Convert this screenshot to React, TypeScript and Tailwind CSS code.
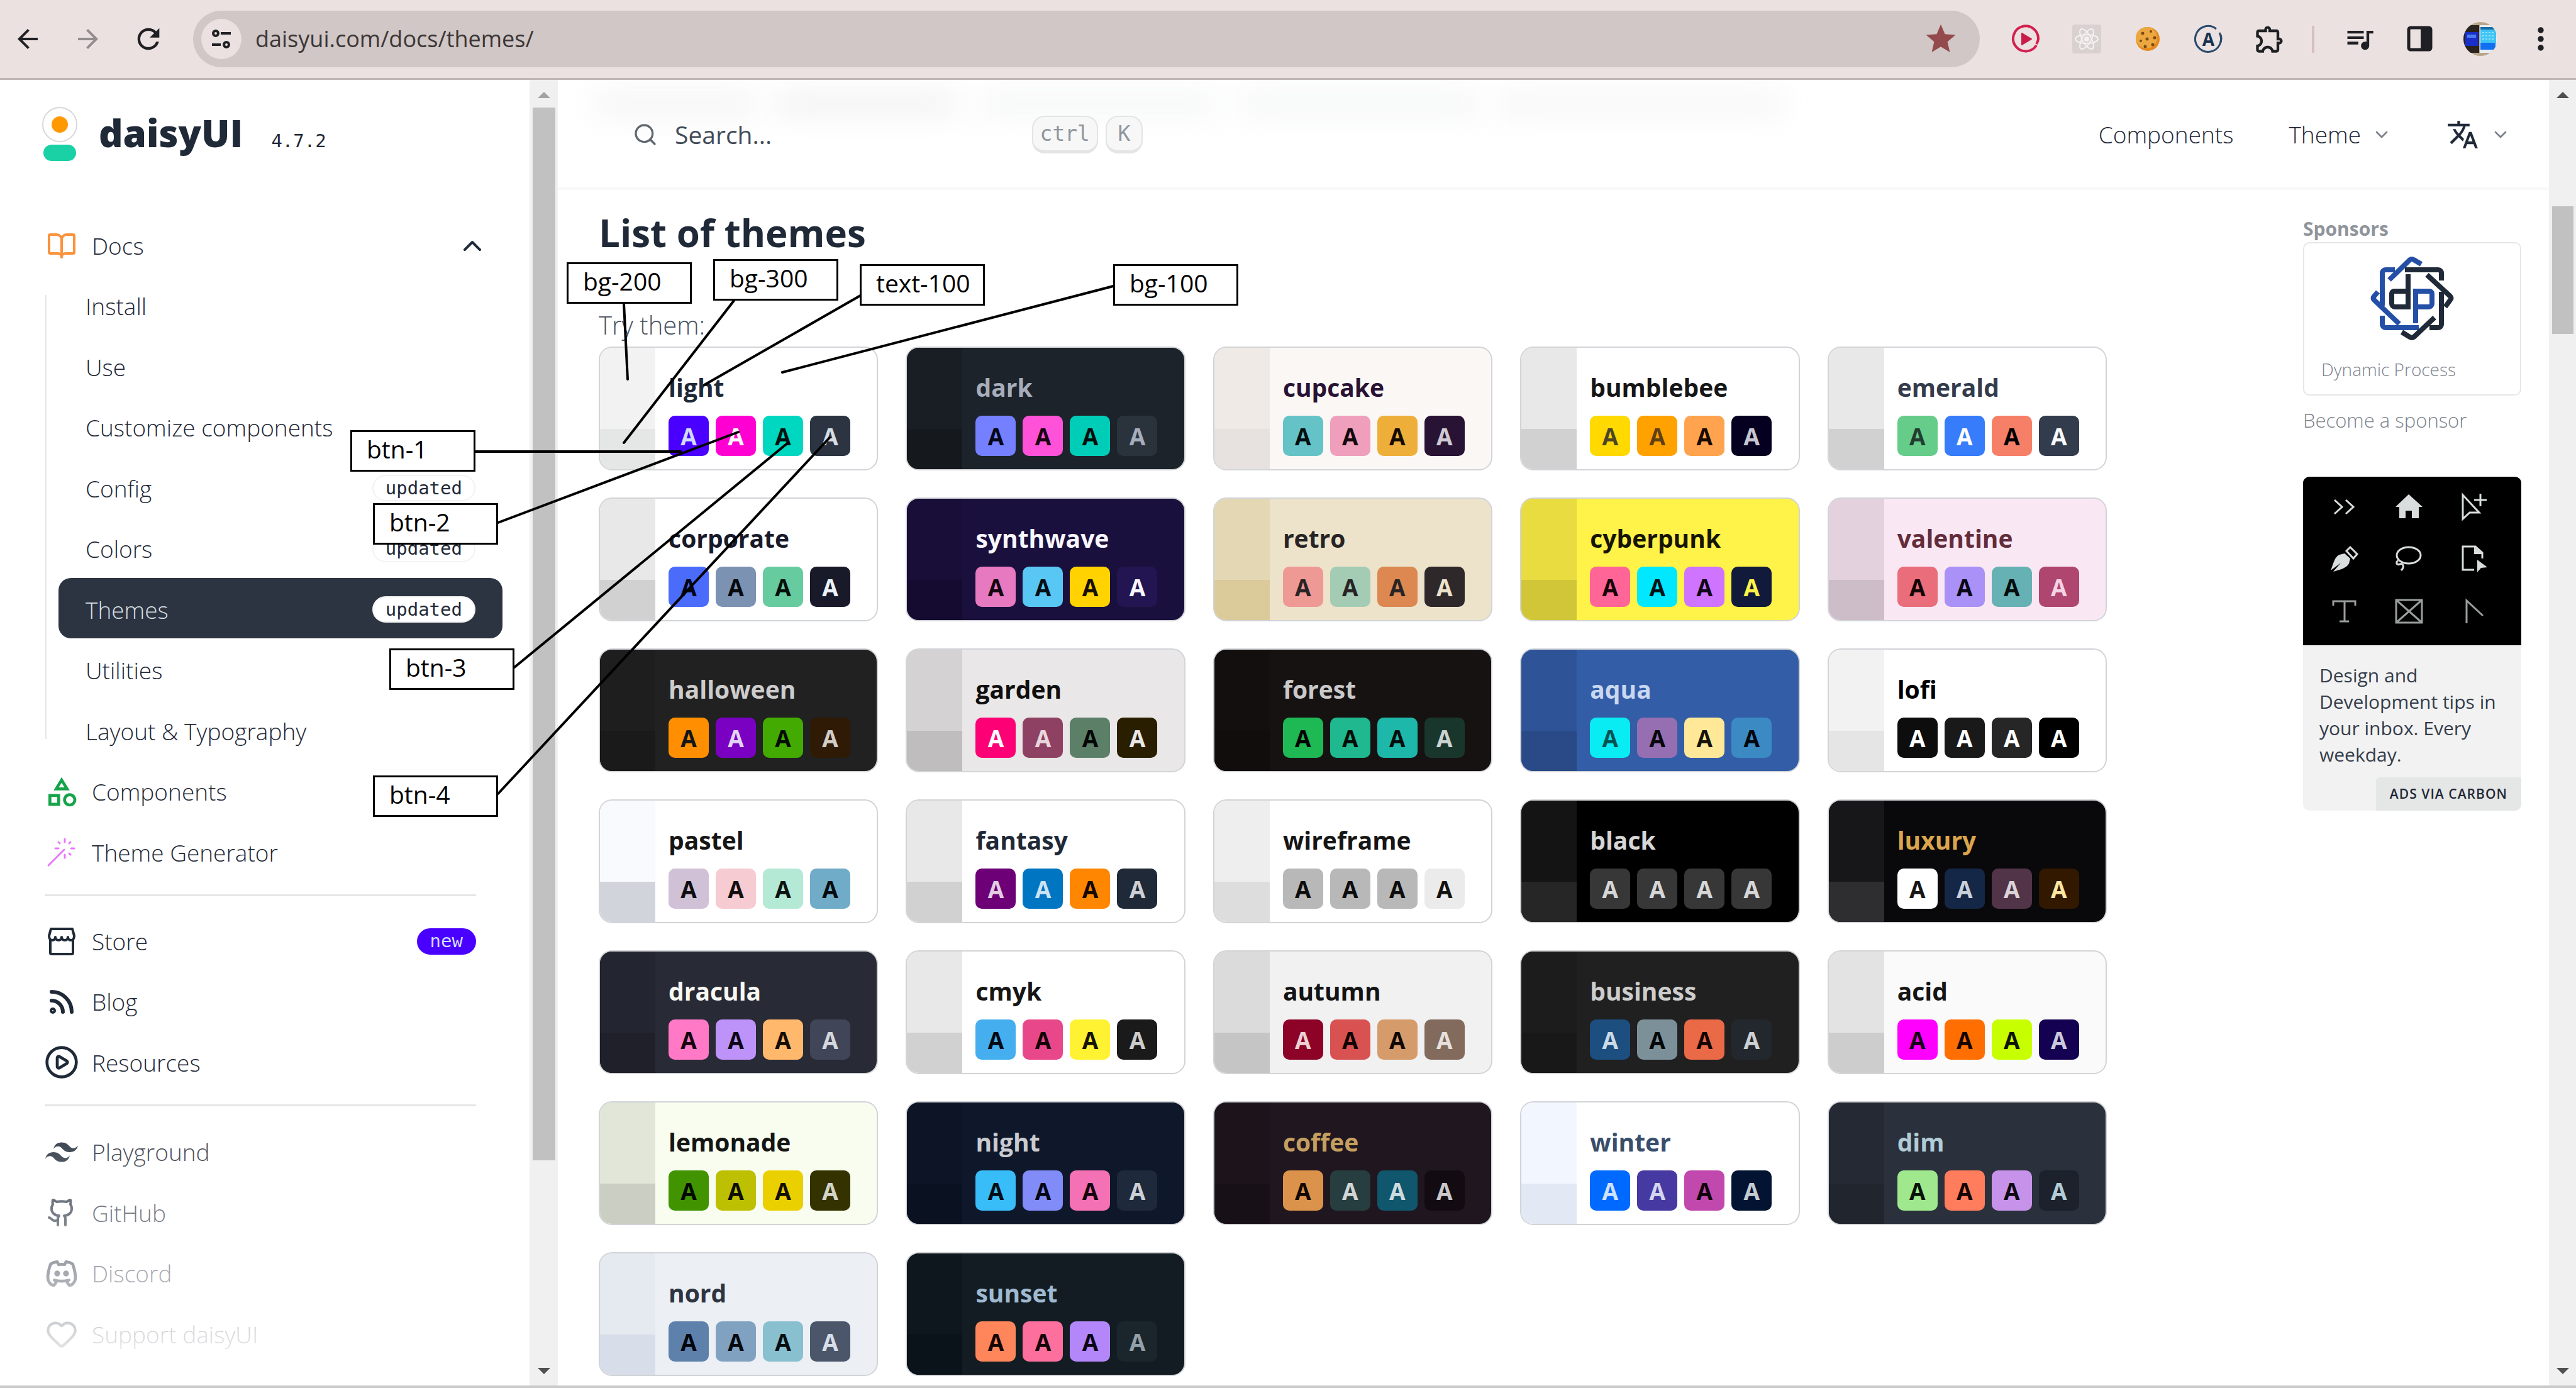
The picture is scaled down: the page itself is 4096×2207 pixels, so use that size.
import type { ReactNode } from "react";
import { BookOpen, ChevronDown, ChevronUp, CirclePlay, Github, Heart, Rss, Search } from "lucide-react";
import {
  MdArrowBack,
  MdArrowForward,
  MdMoreVert,
  MdOutlineCategory,
  MdOutlineExtension,
  MdQueueMusic,
  MdRefresh,
  MdStar,
  MdTranslate,
} from "react-icons/md";
import { TbBrandDiscord } from "react-icons/tb";
import { SiTailwindcss } from "react-icons/si";

type Theme = {
  name: string;
  base: string;
  side: string;
  corner: string;
  swatches: [string, string, string, string];
};

const themes: Theme[] = [
  { name: "light", base: "bg-white text-[#1f2937]", side: "bg-[#f2f2f2]", corner: "bg-[#e5e6e6]", swatches: ["bg-[#4a00ff] text-[#d1dbff]", "bg-[#ff00d3] text-[#fff8fd]", "bg-[#00d7c0] text-[#00110e]", "bg-[#2b3440] text-[#d7dde4]"] },
  { name: "dark", base: "bg-[#1d232a] text-[#a6adbb]", side: "bg-[#191e24]", corner: "bg-[#15191e]", swatches: ["bg-[#7480ff] text-[#050617]", "bg-[#ff52d9] text-[#190211]", "bg-[#00cdb7] text-[#000f0c]", "bg-[#2a323c] text-[#a6adbb]"] },
  { name: "cupcake", base: "bg-[#faf7f5] text-[#291334]", side: "bg-[#efeae6]", corner: "bg-[#e7e2df]", swatches: ["bg-[#65c3c8] text-[#030e0f]", "bg-[#ef9fbc] text-[#14090d]", "bg-[#eeaf3a] text-[#140b00]", "bg-[#291334] text-[#cfcad3]"] },
  { name: "bumblebee", base: "bg-white text-[#161616]", side: "bg-[#e8e8e8]", corner: "bg-[#d1d1d1]", swatches: ["bg-[#ffd900] text-[#4c4528]", "bg-[#ffa200] text-[#5f3f14]", "bg-[#ffa34f] text-[#160a02]", "bg-[#05001f] text-[#c7c5d0]"] },
  { name: "emerald", base: "bg-white text-[#333c4d]", side: "bg-[#e8e8e8]", corner: "bg-[#d1d1d1]", swatches: ["bg-[#66cc8a] text-[#223d30]", "bg-[#377cfb] text-[#ffffff]", "bg-[#f68067] text-[#000000]", "bg-[#333c4d] text-[#f9fafb]"] },
  { name: "corporate", base: "bg-white text-[#181a2a]", side: "bg-[#e8e8e8]", corner: "bg-[#d1d1d1]", swatches: ["bg-[#4b6bfb] text-[#020515]", "bg-[#7b92b2] text-[#06080c]", "bg-[#67cba0] text-[#040f0a]", "bg-[#181a2a] text-[#edf2f7]"] },
  { name: "synthwave", base: "bg-[#1a103d] text-[#f9f7fd]", side: "bg-[#180e37]", corner: "bg-[#150b30]", swatches: ["bg-[#e779c1] text-[#13060e]", "bg-[#58c7f3] text-[#030e14]", "bg-[#ffd200] text-[#161000]", "bg-[#221551] text-[#f9f7fd]"] },
  { name: "retro", base: "bg-[#ece3ca] text-[#282425]", side: "bg-[#e4d8b4]", corner: "bg-[#dbca9a]", swatches: ["bg-[#ef9995] text-[#282425]", "bg-[#a4cbb4] text-[#282425]", "bg-[#dc8850] text-[#282425]", "bg-[#2e282a] text-[#ece3ca]"] },
  { name: "cyberpunk", base: "bg-[#fff248] text-[#161503]", side: "bg-[#e8dc40]", corner: "bg-[#d1c638]", swatches: ["bg-[#ff6596] text-[#160408]", "bg-[#00e8ff] text-[#001316]", "bg-[#ce74ff] text-[#0f0516]", "bg-[#111a3b] text-[#fff248]"] },
  { name: "valentine", base: "bg-[#fae7f4] text-[#632c3b]", side: "bg-[#e3d2de]", corner: "bg-[#cdbdc8]", swatches: ["bg-[#e96d7b] text-[#130405]", "bg-[#a991f7] text-[#0a0815]", "bg-[#66b1b3] text-[#040c0c]", "bg-[#af4670] text-[#f5d3e4]"] },
  { name: "halloween", base: "bg-[#212121] text-[#cdcdcd]", side: "bg-[#1e1e1e]", corner: "bg-[#1a1a1a]", swatches: ["bg-[#ff8f00] text-[#131616]", "bg-[#7a00c2] text-[#e3d4f6]", "bg-[#42aa00] text-[#020b00]", "bg-[#2f1b05] text-[#d2ccc7]"] },
  { name: "garden", base: "bg-[#e9e7e7] text-[#100f0f]", side: "bg-[#d4d2d2]", corner: "bg-[#bfbdbd]", swatches: ["bg-[#fe0075] text-[#ffffff]", "bg-[#8e4162] text-[#e9d6dc]", "bg-[#5c7f67] text-[#030604]", "bg-[#291e00] text-[#e9e7e7]"] },
  { name: "forest", base: "bg-[#171212] text-[#cac9c9]", side: "bg-[#140f0f]", corner: "bg-[#110d0d]", swatches: ["bg-[#1eb854] text-[#000000]", "bg-[#1fb88f] text-[#000c07]", "bg-[#1eb8ab] text-[#000c0b]", "bg-[#19362d] text-[#cdd3d1]"] },
  { name: "aqua", base: "bg-[#345da7] text-[#c9d8f0]", side: "bg-[#2e5397]", corner: "bg-[#294a87]", swatches: ["bg-[#09ecf3] text-[#005355]", "bg-[#966fb3] text-[#09050d]", "bg-[#ffe999] text-[#161309]", "bg-[#3b8ac4] text-[#02070e]"] },
  { name: "lofi", base: "bg-white text-black", side: "bg-[#f2f2f2]", corner: "bg-[#e6e5e5]", swatches: ["bg-[#0d0d0d] text-white", "bg-[#1a1919] text-white", "bg-[#262626] text-white", "bg-black text-white"] },
  { name: "pastel", base: "bg-white text-[#161616]", side: "bg-[#f9fafe]", corner: "bg-[#d1d5db]", swatches: ["bg-[#d1c1d7] text-[#100e11]", "bg-[#f6cbd1] text-[#150f10]", "bg-[#b4e9d6] text-[#0c1311]", "bg-[#70acc7] text-[#050b0f]"] },
  { name: "fantasy", base: "bg-white text-[#1f2937]", side: "bg-[#e8e8e8]", corner: "bg-[#d1d1d1]", swatches: ["bg-[#6d0076] text-[#e2cde3]", "bg-[#0075c2] text-[#cbe3f5]", "bg-[#ff8600] text-[#160700]", "bg-[#1f2937] text-[#cdd0d3]"] },
  { name: "wireframe", base: "bg-white text-[#161616]", side: "bg-[#eeeeee]", corner: "bg-[#dddddd]", swatches: ["bg-[#b8b8b8] text-[#0d0d0d]", "bg-[#b8b8b8] text-[#0d0d0d]", "bg-[#b8b8b8] text-[#0d0d0d]", "bg-[#ebebeb] text-[#131313]"] },
  { name: "black", base: "bg-black text-[#d6d6d6]", side: "bg-[#141414]", corner: "bg-[#262626]", swatches: ["bg-[#373737] text-[#d6d6d6]", "bg-[#373737] text-[#d6d6d6]", "bg-[#373737] text-[#d6d6d6]", "bg-[#373737] text-[#d6d6d6]"] },
  { name: "luxury", base: "bg-[#09090b] text-[#dca54c]", side: "bg-[#171618]", corner: "bg-[#2e2d2f]", swatches: ["bg-white text-[#161616]", "bg-[#152747] text-[#cad0da]", "bg-[#513448] text-[#dad3d8]", "bg-[#331800] text-[#ffe7a3]"] },
  { name: "dracula", base: "bg-[#282a36] text-[#f8f8f2]", side: "bg-[#232530]", corner: "bg-[#1f202a]", swatches: ["bg-[#ff79c6] text-[#16050e]", "bg-[#bd93f9] text-[#0d0815]", "bg-[#ffb86c] text-[#160d04]", "bg-[#414558] text-[#d6d7db]"] },
  { name: "cmyk", base: "bg-white text-[#161616]", side: "bg-[#e8e8e8]", corner: "bg-[#d1d1d1]", swatches: ["bg-[#45aeee] text-[#020b14]", "bg-[#e8488a] text-[#130307]", "bg-[#fff232] text-[#161402]", "bg-[#1a1a1a] text-[#cbcbcb]"] },
  { name: "autumn", base: "bg-[#f1f1f1] text-[#141414]", side: "bg-[#dbdbdb]", corner: "bg-[#c5c5c5]", swatches: ["bg-[#8c0327] text-[#edd0d1]", "bg-[#d85251] text-[#110202]", "bg-[#d59b6a] text-[#100905]", "bg-[#826a5c] text-[#e6e0dd]"] },
  { name: "business", base: "bg-[#202020] text-[#cdcdcd]", side: "bg-[#1c1c1c]", corner: "bg-[#181818]", swatches: ["bg-[#1c4e80] text-[#ccd9e6]", "bg-[#7c909a] text-[#050709]", "bg-[#ea6947] text-[#130402]", "bg-[#23282e] text-[#cdcfd1]"] },
  { name: "acid", base: "bg-[#fafafa] text-[#151515]", side: "bg-[#e3e3e3]", corner: "bg-[#cdcdcd]", swatches: ["bg-[#ff00ff] text-[#160016]", "bg-[#ff6e00] text-[#160400]", "bg-[#c8ff00] text-[#0e1600]", "bg-[#140151] text-[#cac9db]"] },
  { name: "lemonade", base: "bg-[#f8fdef] text-[#151614]", side: "bg-[#e1e6d9]", corner: "bg-[#cbcfc3]", swatches: ["bg-[#419400] text-[#010800]", "bg-[#bdc000] text-[#0d0e00]", "bg-[#ebd000] text-[#131000]", "bg-[#343300] text-[#d3d3c8]"] },
  { name: "night", base: "bg-[#0f172a] text-[#c9cbd0]", side: "bg-[#0c1425]", corner: "bg-[#0a1120]", swatches: ["bg-[#38bdf8] text-[#010d15]", "bg-[#818cf8] text-[#060715]", "bg-[#f471b5] text-[#14040c]", "bg-[#1e293b] text-[#cccfd3]"] },
  { name: "coffee", base: "bg-[#20161f] text-[#c59f60]", side: "bg-[#1c131b]", corner: "bg-[#181017]", swatches: ["bg-[#db924b] text-[#110802]", "bg-[#263e3f] text-[#d0d5d5]", "bg-[#10576d] text-[#cddbdf]", "bg-[#120c12] text-[#c9c7c9]"] },
  { name: "winter", base: "bg-white text-[#394e6a]", side: "bg-[#f2f7ff]", corner: "bg-[#e3e9f4]", swatches: ["bg-[#0069ff] text-[#cde2ff]", "bg-[#463aa2] text-[#d3d5ee]", "bg-[#c148ac] text-[#0e020b]", "bg-[#021431] text-[#c5cad1]"] },
  { name: "dim", base: "bg-[#2a303c] text-[#b2ccd6]", side: "bg-[#242933]", corner: "bg-[#20252e]", swatches: ["bg-[#9fe88d] text-[#091307]", "bg-[#ff7d5c] text-[#160503]", "bg-[#c792e9] text-[#0e0813]", "bg-[#1c212b] text-[#b2ccd6]"] },
  { name: "nord", base: "bg-[#eceff4] text-[#2e3440]", side: "bg-[#e5e9f0]", corner: "bg-[#d8dee9]", swatches: ["bg-[#5e81ac] text-[#03060b]", "bg-[#81a1c1] text-[#06090e]", "bg-[#88c0d0] text-[#070e10]", "bg-[#4c566a] text-[#d8dee9]"] },
  { name: "sunset", base: "bg-[#121c22] text-[#9fb9d0]", side: "bg-[#0e171e]", corner: "bg-[#091319]", swatches: ["bg-[#ff865b] text-[#160603]", "bg-[#fd6f9c] text-[#160409]", "bg-[#b387fa] text-[#0b0615]", "bg-[#1b262c] text-[#94a0a9]"] },
];

function StoreIcon() {
  return (
    <svg viewBox="0 0 48 48" className="size-12" fill="none" stroke="currentColor" strokeWidth="4" strokeLinejoin="round">
      <path d="M6 22v20a2 2 0 0 0 2 2h32a2 2 0 0 0 2-2V22" />
      <path d="M7 4h34l3 11c0 4-2 7-5 7-4 0-5-3-5-5 0 3-2 5-5 5s-5-2-5-5c0 3-2 5-5 5s-5-2-5-5c0 2-1 5-5 5-3 0-5-3-5-7z" />
    </svg>
  );
}

function WandIcon() {
  return (
    <svg viewBox="0 0 48 48" className="size-12 text-[#e879f9]" fill="none" stroke="currentColor" strokeWidth="3" strokeLinecap="round">
      <path d="M3 45 28 20" />
      <path d="M29 3v5M29 28v5M14 18h5M39 18h5M19 8l2 2M38 8l-2 2M38 28l-2-2" />
    </svg>
  );
}

function TuneIcon() {
  return (
    <svg viewBox="0 0 40 40" className="size-10" fill="none" stroke="#1f2023" strokeWidth="4">
      <circle cx="11" cy="11" r="4" />
      <path d="M19 11h16M5 29h14" />
      <circle cx="28" cy="29" r="4" />
    </svg>
  );
}

function ReactExtIcon() {
  return (
    <svg viewBox="0 0 46 46" className="size-[46px]" fill="none" stroke="#f6f1f1" strokeWidth="2">
      <rect width="46" height="46" rx="4" fill="#d9d1d0" stroke="none" />
      <ellipse cx="23" cy="23" rx="18" ry="7" />
      <ellipse cx="23" cy="23" rx="18" ry="7" transform="rotate(60 23 23)" />
      <ellipse cx="23" cy="23" rx="18" ry="7" transform="rotate(120 23 23)" />
      <circle cx="23" cy="23" r="3" fill="#f6f1f1" />
    </svg>
  );
}

function PlayExtIcon() {
  return (
    <svg viewBox="0 0 46 46" className="size-[46px]">
      <path d="M40 33A20 20 0 1 1 43 23a20 20 0 0 1-3 8" fill="none" stroke="#d41f4f" strokeWidth="4" />
      <path d="M17 14v18l15-9z" fill="#c91c4b" stroke="#c91c4b" strokeWidth="2" strokeLinejoin="round" />
    </svg>
  );
}

function CookieIcon() {
  return (
    <svg viewBox="0 0 40 40" className="size-10">
      <circle cx="20" cy="20" r="19" fill="#e58a1c" />
      <circle cx="18" cy="18" r="17" fill="#eba740" />
      <g fill="#7d4a16">
        <circle cx="12" cy="11" r="2.5" />
        <circle cx="25" cy="8" r="2" />
        <circle cx="19" cy="20" r="2.5" />
        <circle cx="31" cy="18" r="2.5" />
        <circle cx="9" cy="23" r="2" />
        <circle cx="16" cy="32" r="2.5" />
        <circle cx="28" cy="29" r="2.5" />
      </g>
    </svg>
  );
}

function LetterExtIcon() {
  return (
    <span className="relative flex size-[46px] items-center justify-center">
      <svg viewBox="0 0 46 46" className="absolute inset-0" fill="none" stroke="#2b4a6b" strokeWidth="3">
        <path d="M40 13a20.500 20.500 0 1 1-5-6" />
        <path d="M42 16a21 21 0 0 1 0 12" />
      </svg>
      <span className="font-['Open_Sans',sans-serif] text-[28px] leading-none font-bold text-[#17324f]">A</span>
    </span>
  );
}

function SidePanelIcon() {
  return (
    <svg viewBox="0 0 42 42" className="size-[42px]">
      <rect x="3" y="3" width="35" height="35" rx="3" fill="none" stroke="#1f2023" strokeWidth="5" />
      <path d="M22 3h16v35H22z" fill="#1f2023" />
    </svg>
  );
}

function Avatar() {
  return (
    <svg viewBox="0 0 54 54" className="size-[54px]">
      <defs>
        <clipPath id="avatar-clip">
          <circle cx="27" cy="27" r="27" />
        </clipPath>
      </defs>
      <g clipPath="url(#avatar-clip)">
        <rect width="54" height="54" fill="#b7a68a" />
        <rect x="0" y="5" width="25" height="44" fill="#2a2320" />
        <rect x="3" y="16" width="21" height="22" fill="#1a2fc8" />
        <rect x="6" y="20" width="14" height="5" fill="#4d7df0" />
        <rect x="26" y="5" width="28" height="44" fill="#e9edf0" />
        <rect x="27" y="8" width="26" height="4" fill="#1a6ea8" />
        <rect x="27" y="12" width="25" height="22" fill="#3fc3f4" />
        <rect x="27" y="33" width="24" height="11" fill="#1170f2" />
        <path d="M30 17h18M30 22h18M30 27h18" stroke="#8fe3fa" strokeWidth="2" strokeDasharray="3 2" />
      </g>
    </svg>
  );
}

function IconButton({ label, children, className }: { label: string; children: ReactNode; className: string }) {
  return (
    <button type="button" aria-label={label} className={`flex items-center justify-center ${className}`}>
      {children}
    </button>
  );
}

function BrowserBar() {
  return (
    <header className="flex h-[127px] shrink-0 items-center border-b-3 border-[#bfb5b4] bg-[#ebe1e0] text-[#1f2023]">
      <div className="flex items-center gap-[52px] pl-[22px]">
        <IconButton label="Back" className="size-11"><MdArrowBack className="size-12 shrink-0" /></IconButton>
        <IconButton label="Forward" className="size-11 text-[#948d8d]"><MdArrowForward className="size-12 shrink-0" /></IconButton>
        <IconButton label="Reload" className="size-11"><MdRefresh className="size-13 shrink-0" /></IconButton>
      </div>
      <div className="ml-[49px] flex h-[90px] min-w-0 flex-1 items-center rounded-full bg-[#d0c7c6] pr-[34px] pl-[13px]">
        <IconButton label="Site information" className="size-16 rounded-full bg-[#ebe1e0]"><TuneIcon /></IconButton>
        <input
          aria-label="Address"
          defaultValue="daisyui.com/docs/themes/"
          className="ml-[22px] min-w-0 flex-1 bg-transparent text-[36px] leading-[60px] text-[#3c3636] outline-none"
        />
        <IconButton label="Bookmark this page" className="size-14 text-[#944a4c]"><MdStar className="size-14" /></IconButton>
      </div>
      <div className="flex items-center pl-6">
        <IconButton label="Video extension" className="w-[97px]"><PlayExtIcon /></IconButton>
        <IconButton label="React tools" className="w-[97px]"><ReactExtIcon /></IconButton>
        <IconButton label="Cookies" className="w-[97px]"><CookieIcon /></IconButton>
        <IconButton label="Accessibility tools" className="w-[97px]"><LetterExtIcon /></IconButton>
        <IconButton label="Extensions" className="w-[97px]"><MdOutlineExtension className="size-13" /></IconButton>
        <span className="mr-6 ml-[19px] h-[43px] w-1 bg-[#d8bebe]" />
        <IconButton label="Media" className="w-24"><MdQueueMusic className="size-13" /></IconButton>
        <IconButton label="Side panel" className="w-24"><SidePanelIcon /></IconButton>
        <IconButton label="Profile" className="w-24"><Avatar /></IconButton>
        <IconButton label="Menu" className="mr-2 w-24"><MdMoreVert className="size-14" /></IconButton>
      </div>
    </header>
  );
}

function Badge({ children, tone = "bg-white text-[#1f2937] border-[#f2f2f2]" }: { children: string; tone?: string }) {
  return (
    <span className={`flex h-[42px] items-center rounded-full border-2 px-[19px] font-['DejaVu_Sans_Mono',monospace] text-[29px] leading-none ${tone}`}>
      {children}
    </span>
  );
}

function NavRow({ icon, label, children }: { icon: ReactNode; label: string; children?: ReactNode }) {
  return (
    <li className="flex flex-1">
      <a href="#" className="flex flex-1 items-center gap-6 pt-[5px] pr-[43px] pl-[31px]">
        <span className="flex w-12 justify-center">{icon}</span>
        <span className="flex-1">{label}</span>
        {children}
      </a>
    </li>
  );
}

const docLinks = [
  { label: "Install" },
  { label: "Use" },
  { label: "Customize components" },
  { label: "Config", updated: true },
  { label: "Colors", updated: true },
  { label: "Themes", updated: true, active: true },
  { label: "Utilities" },
  { label: "Layout & Typography" },
];

function Triangle({ down = false, className }: { down?: boolean; className: string }) {
  return (
    <svg viewBox="0 0 20 10" className={`h-[10px] w-5 ${className}`} fill="currentColor">
      <path d={down ? "M0 0h20L10 10z" : "M0 10h20L10 0z"} />
    </svg>
  );
}

function Sidebar() {
  return (
    <aside className="relative flex w-[842px] shrink-0 flex-col bg-white text-[37px] font-light text-[#1f2937]">
      <a href="#" className="flex items-start pt-[43px] pl-[67px]">
        <svg viewBox="0 0 56 86" className="h-[86px] w-14">
          <circle cx="28" cy="28" r="27" fill="#fff" stroke="#d8d8d8" strokeWidth="2" />
          <circle cx="28" cy="28" r="13" fill="#ff9903" />
          <rect x="2" y="60" width="52" height="26" rx="13" fill="#1ad1a5" />
        </svg>
        <span className="ml-[34px] flex items-baseline gap-[45px]">
          <span className="text-[60px] leading-[82px] font-extrabold">daisyUI</span>
          <span className="font-['DejaVu_Sans_Mono',monospace] text-[29px]">4.7.2</span>
        </span>
      </a>
      <nav className="mt-[84px] flex flex-col pl-[43px]">
        <button type="button" className="flex h-24 items-center gap-6 pt-[5px] pr-[67px] pl-[31px] text-left">
          <BookOpen className="size-12 text-[#fb923c]" strokeWidth={2} />
          <span className="flex-1">Docs</span>
          <ChevronUp className="size-12 text-[#1f2937]" strokeWidth={2} />
        </button>
        <div className="relative ml-[29px] before:absolute before:inset-y-[33px] before:left-0 before:w-[2px] before:bg-[#e5e6e6]">
          <ul className="flex h-[772px] flex-col pr-[43px] pl-[21px]">
            {docLinks.map((item) => (
              <li key={item.label} className="flex flex-1">
                <a
                  href="#"
                  className={
                    item.active
                      ? "flex flex-1 items-center justify-between rounded-[20px] bg-[#2b3440] pt-[5px] pr-[43px] pl-[43px] text-[#d7dde4]"
                      : "flex flex-1 items-center justify-between pt-[5px] pr-[43px] pl-[43px]"
                  }
                >
                  {item.label}
                  {item.updated && <Badge>updated</Badge>}
                </a>
              </li>
            ))}
          </ul>
        </div>
        <ul className="flex h-[193px] flex-col pr-[43px]">
          <NavRow icon={<MdOutlineCategory className="size-14 shrink-0 text-[#16a34a]" />} label="Components" />
          <NavRow icon={<WandIcon />} label="Theme Generator" />
        </ul>
        <hr className="mt-[21px] mr-[85px] mb-[21px] ml-7 border-t-3 border-[#e6e6e6]" />
        <ul className="flex h-[289px] flex-col pr-[42px]">
          <NavRow icon={<StoreIcon />} label="Store">
            <Badge tone="bg-[#4a00ff] text-[#d1dbff] border-[#4a00ff]">new</Badge>
          </NavRow>
          <NavRow icon={<Rss className="size-12" strokeWidth={3} />} label="Blog" />
          <NavRow icon={<CirclePlay className="size-14 shrink-0" strokeWidth={2} />} label="Resources" />
        </ul>
        <hr className="mt-[21px] mr-[85px] mb-[22px] ml-7 border-t-3 border-[#e6e6e6]" />
        <ul className="flex h-[386px] flex-col pr-[43px]">
          <NavRow icon={<SiTailwindcss className="size-13 shrink-0" />} label="Playground" />
          <NavRow icon={<Github className="size-12" strokeWidth={2} />} label="GitHub" />
          <NavRow icon={<TbBrandDiscord className="size-14 shrink-0" />} label="Discord" />
          <NavRow icon={<Heart className="size-13 shrink-0" strokeWidth={2} />} label="Support daisyUI" />
        </ul>
      </nav>
      <div className="pointer-events-none absolute inset-x-0 bottom-0 h-[450px] bg-gradient-to-t from-white to-white/0" />
    </aside>
  );
}

function Kbd({ children }: { children: string }) {
  return (
    <kbd className="flex h-[60px] min-w-[59px] items-center justify-center rounded-[20px] border-2 border-b-5 border-[#e3e4e4] bg-[#f7f7f7] px-[11px] font-['DejaVu_Sans_Mono',monospace] text-[33px] leading-none text-[#8f959c]">
      {children}
    </kbd>
  );
}

function SiteHeader() {
  return (
    <div className="relative flex h-[175px] shrink-0 items-center border-b-4 border-[#f8f8f8] pt-[3px] pr-[61px] pl-[119px] text-[37px] font-light">
      <div className="pointer-events-none absolute top-5 left-[60px] flex gap-8 blur-xl">
        <span className="h-9 w-64 bg-[#f3f3f3]" />
        <span className="h-9 w-72 bg-[#f1f1f1]" />
        <span className="h-9 w-96 bg-[#f5f6f6]" />
        <span className="h-9 w-96 bg-[#f4f5f5]" />
        <span className="h-9 w-[450px] bg-[#f5f5f5]" />
      </div>
      <label htmlFor="site-search" className="relative flex w-[811px] items-center">
        <Search className="size-10 text-[#5f6670]" strokeWidth={2} />
        <input
          id="site-search"
          placeholder="Search..."
          className="ml-[27px] min-w-0 flex-1 bg-transparent text-[39px] font-normal outline-none placeholder:text-[#414b59]"
        />
        <span className="flex gap-3">
          <Kbd>ctrl</Kbd>
          <Kbd>K</Kbd>
        </span>
      </label>
      <nav className="ml-auto flex items-center">
        <a href="#" className="text-[#1f2937]">Components</a>
        <button type="button" className="ml-[88px] flex items-center gap-[17px] text-[#1f2937]">
          Theme
          <ChevronDown className="size-8 text-[#7c828b]" strokeWidth={2} />
        </button>
        <button type="button" aria-label="Language" className="ml-[87px] flex items-center gap-[18px] text-[#1f2937]">
          <MdTranslate className="size-[52px]" />
          <ChevronDown className="size-8 text-[#7c828b]" strokeWidth={2} />
        </button>
      </nav>
    </div>
  );
}

function ThemeCard({ theme }: { theme: Theme }) {
  return (
    <button type="button" className={`flex h-[197px] overflow-hidden rounded-[21px] border-2 border-[#d2d4d7] text-left ${theme.base}`}>
      <span className="flex h-full w-1/5 flex-col">
        <span className={`flex-2 ${theme.side}`} />
        <span className={`flex-1 ${theme.corner}`} />
      </span>
      <span className="flex h-full flex-1 flex-col justify-end gap-[14px] p-[21px]">
        <span className="text-[39px] leading-[62px] font-bold">{theme.name}</span>
        <span className="flex gap-[11px]">
          {theme.swatches.map((tone, i) => (
            <span key={i} className={`flex size-16 items-center justify-center rounded-[10px] text-[37px] leading-none font-bold ${tone}`}>
              A
            </span>
          ))}
        </span>
      </span>
    </button>
  );
}

function SponsorLogo() {
  return (
    <svg viewBox="0 0 133 135" className="h-[135px] w-[133px]" fill="none" strokeWidth="8">
      <g stroke="#244fa6">
        <path d="M39 22H24a5 5 0 0 0-5 5v52" />
        <path d="M19 95v14a5 5 0 0 0 5 5h53" />
        <path d="M81 13 69 6q-3-2-6 0L30 38" />
        <path d="M12 57 6 64q-3 3 0 6l40 38" />
        <path d="M72 107V56h22a4 4 0 0 1 4 4v16a5 5 0 0 1-5 5H76" />
      </g>
      <g stroke="#1f2937">
        <path d="M55 22h53a5 5 0 0 1 5 5v12" />
        <path d="M113 57v52a5 5 0 0 1-5 5H94" />
        <path d="m90 30 37 34q3 3 0 6l-8 11" />
        <path d="M102 98 69 129q-3 2-6 0l-13-8" />
        <path d="M60 29v52H39a5 5 0 0 1-5-5V60a4 4 0 0 1 4-4h22" />
      </g>
    </svg>
  );
}

function AdArtwork() {
  return (
    <svg viewBox="0 0 347 268" className="block w-full bg-black" fill="none" stroke="#d9dddd" strokeWidth="3">
      <path d="m50 37 12 11-12 11M68 37l12 11-12 11" />
      <path d="M168 28 147 48h6v18h10V54h10v12h11V48h6z" fill="#d9dddd" stroke="none" />
      <path d="M254 29v38l11-10h15zM282 27v20M272 37h20" />
      <path d="M44 149c4-10 6-22 14-25l8-2 9 8-2 8c-4 8-16 10-25 13l12-14z" fill="#d9dddd" stroke="none" />
      <path d="m69 118 6-6 11 11-6 7z" />
      <ellipse cx="168" cy="125" rx="19" ry="13" />
      <path d="M151 133c-4 4-2 8 3 6s8 4 2 10" />
      <path d="M272 148h-18v-37h20l11 10v9" />
      <path d="m272 111 14 12h-14zM277 132l16 12-10 1-6 7z" fill="#d9dddd" stroke="none" />
      <g stroke="#9b9e9e">
        <path d="M48 205v-7h35v7M66 198v32M58 230h15" />
        <path d="M148 196h41v36h-41zM148 196l41 36M189 196l-41 36" />
        <path d="M260 233v-36l26 24" />
      </g>
    </svg>
  );
}

function SponsorColumn() {
  return (
    <aside className="w-[347px] shrink-0 pt-[41px] text-[30px] leading-[42px] font-light">
      <h2 className="font-bold text-[#8f949b]">Sponsors</h2>
      <a href="#" className="flex h-[244px] flex-col rounded-[10px] border-2 border-[#e7e7e7] px-[27px] pt-5 text-[#7d838b]">
        <span className="flex justify-center"><SponsorLogo /></span>
        <span className="mt-6 text-[28px]">Dynamic Process</span>
      </a>
      <a href="#" className="mt-[18px] block text-[31px] text-[#7d838b]">Become a sponsor</a>
      <div className="mt-[69px] overflow-hidden rounded-[10px] bg-[#f2f2f2] text-[#1f2937]">
        <AdArtwork />
        <p className="pr-[20px] pl-[26px] pt-[27px] font-normal text-[#343d4a]">Design and Development tips in your inbox. Every weekday.</p>
        <div className="mt-[15px] flex justify-end">
          <a href="#" className="rounded-tl-[6px] bg-[#e5e6e6] px-[22px] text-[21px] leading-[53px] font-semibold tracking-wider">ADS VIA CARBON</a>
        </div>
      </div>
    </aside>
  );
}

function Annotation({ label, place }: { label: string; place: string }) {
  return (
    <div className={`absolute h-[66px] w-[199px] border-3 border-black bg-white pl-[23px] text-[39px] leading-[54px] text-black ${place}`}>
      {label}
    </div>
  );
}

function Annotations() {
  return (
    <div className="pointer-events-none absolute inset-0">
      <svg className="absolute inset-0 h-full w-full" stroke="#000" strokeWidth="4" strokeLinecap="round">
        <line x1="992" y1="483" x2="998" y2="603" />
        <line x1="1167" y1="478" x2="992" y2="704" />
        <line x1="1368" y1="470" x2="1120" y2="612" />
        <line x1="1770" y1="455" x2="1244" y2="592" />
        <line x1="755" y1="718" x2="1082" y2="718" />
        <line x1="792" y1="831" x2="1174" y2="687" />
        <line x1="818" y1="1061" x2="1253" y2="704" />
        <line x1="792" y1="1262" x2="1319" y2="696" />
      </svg>
      <Annotation label="bg-200" place="left-[901px] top-[417px]" />
      <Annotation label="bg-300" place="left-[1134px] top-[412px]" />
      <Annotation label="text-100" place="left-[1367px] top-[420px]" />
      <Annotation label="bg-100" place="left-[1770px] top-[420px]" />
      <Annotation label="btn-1" place="left-[557px] top-[684px]" />
      <Annotation label="btn-2" place="left-[593px] top-[800px]" />
      <Annotation label="btn-3" place="left-[619px] top-[1031px]" />
      <Annotation label="btn-4" place="left-[593px] top-[1233px]" />
    </div>
  );
}

export default function App() {
  return (
    <div className="relative flex h-screen flex-col overflow-hidden bg-white font-['Open_Sans',sans-serif]">
      <BrowserBar />
      <div className="flex min-h-0 flex-1 border-b-4 border-[#cacaca]">
        <Sidebar />
        <div className="flex w-[45px] shrink-0 flex-col items-center bg-[#f0f0f0] pt-[19px] pb-[18px]">
          <Triangle className="text-[#a3a3a3]" />
          <div className="mt-[15px] h-[1674px] w-9 bg-[#c1c1c1]" />
          <Triangle down className="mt-auto text-[#505050]" />
        </div>
        <main className="flex min-w-0 flex-1 flex-col overflow-hidden">
          <SiteHeader />
          <div className="flex gap-[312px] pr-[44px] pl-[65px]">
            <section className="min-w-0 flex-1 pt-7">
              <h1 className="text-[60px] leading-[80px] font-bold text-[#1f2937]">List of themes</h1>
              <p className="mt-[76px] text-[40px] leading-[62px] font-light text-[#4b5563]">Try them:</p>
              <div className="mt-[3px] grid grid-cols-5 gap-x-11 gap-y-[43px]">
                {themes.map((theme) => (
                  <ThemeCard key={theme.name} theme={theme} />
                ))}
              </div>
            </section>
            <SponsorColumn />
          </div>
        </main>
        <div className="flex w-[43px] shrink-0 flex-col items-center bg-[#f0f0f0] pt-[19px] pb-[18px]">
          <Triangle className="text-[#505050]" />
          <div className="mt-[172px] h-[203px] w-[34px] bg-[#c1c1c1]" />
          <Triangle down className="mt-auto text-[#505050]" />
        </div>
      </div>
      <Annotations />
    </div>
  );
}
